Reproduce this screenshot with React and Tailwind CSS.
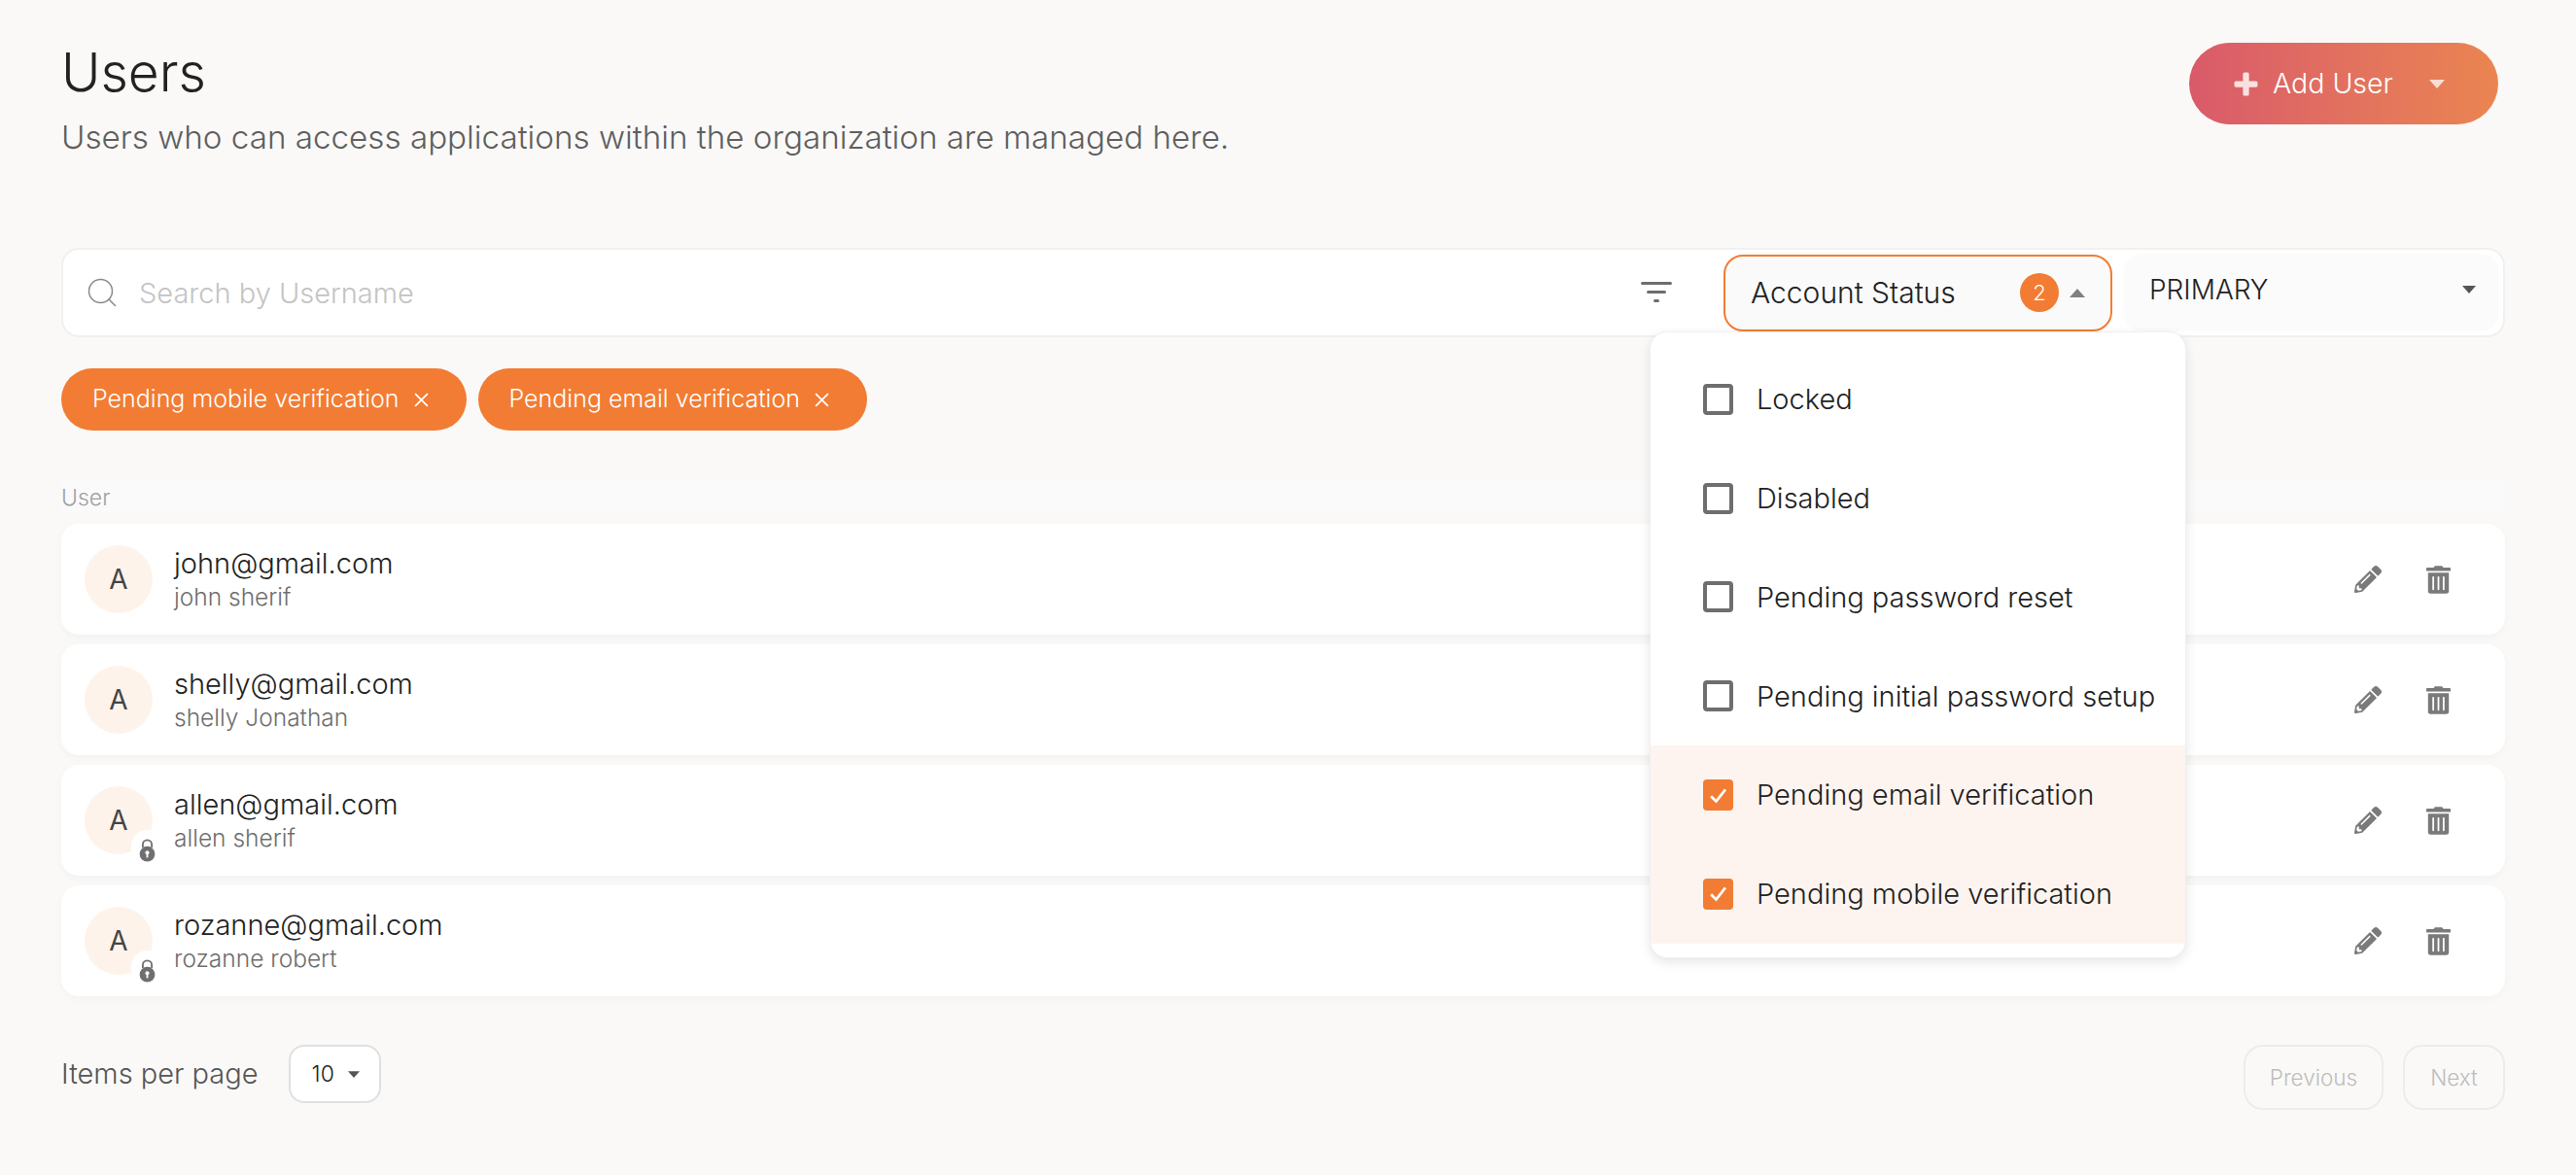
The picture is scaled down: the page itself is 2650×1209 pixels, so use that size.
import { Search } from 'lucide-react';
import { FaPencilAlt, FaTrashAlt } from 'react-icons/fa';

const users = [
    { email: 'john@gmail.com', name: 'john sherif', locked: false },
    { email: 'shelly@gmail.com', name: 'shelly Jonathan', locked: false },
    { email: 'allen@gmail.com', name: 'allen sherif', locked: true },
    { email: 'rozanne@gmail.com', name: 'rozanne robert', locked: true },
];

const statuses = [
    { label: 'Locked', checked: false },
    { label: 'Disabled', checked: false },
    { label: 'Pending password reset', checked: false },
    { label: 'Pending initial password setup', checked: false },
    { label: 'Pending email verification', checked: true },
    { label: 'Pending mobile verification', checked: true },
];

function Caret({ className, up }) {
    return (
        <svg viewBox="0 0 16 9" className={className} fill="currentColor">
            <path d={up ? 'M8 0 16 9H0Z' : 'M0 0H16L8 9Z'} />
        </svg>
    );
}

function LockBadge() {
    return (
        <div className="absolute right-[-10px] bottom-[-9px] w-[32px] h-[34px] rounded-full bg-white flex items-end justify-center pb-[1px]">
            <svg viewBox="0 0 18 26" className="w-[17px] h-[24px]" fill="#6f6f6f">
                <path d="M4 10V6.5a5 5 0 0 1 10 0V10" fill="none" stroke="#6f6f6f" strokeWidth="2" />
                <circle cx="9" cy="17" r="8.5" />
                <circle cx="9" cy="15.5" r="2.2" fill="#fff" />
                <rect x="8" y="16" width="2" height="5" fill="#fff" />
            </svg>
        </div>
    );
}

function Chip({ label }) {
    return (
        <div className="h-[64px] pl-[32px] pr-[38px] rounded-[32px] bg-[#f27c33] text-white flex items-center gap-[14px] text-[25px] font-light">
            <span>{label}</span>
            <svg viewBox="0 0 16 16" className="w-[17px] h-[17px]" stroke="#fff" strokeWidth="1.6" fill="none">
                <path d="M2 2 14 14M14 2 2 14" />
            </svg>
        </div>
    );
}

function UserRow({ user }) {
    return (
        <div className="h-[114px] rounded-[18px] bg-white shadow-[0_3px_8px_rgba(0,0,0,0.03)] flex items-center pl-[24px] pr-[56px]">
            <div className="relative w-[70px] h-[70px] rounded-full bg-[#fdf3ea] flex items-center justify-center text-[28px] text-[#444]">
                A
                {user.locked && <LockBadge />}
            </div>
            <div className="ml-[22px] flex-1">
                <div className="text-[29px] leading-[36px] font-light text-[#222]">{user.email}</div>
                <div className="text-[24.5px] leading-[32px] font-light text-[#6e6e6e]">{user.name}</div>
            </div>
            <FaPencilAlt className="w-[28px] h-[28px] text-[#7a7a7a]" />
            <FaTrashAlt className="ml-[46px] w-[25px] h-[29px] text-[#7a7a7a]" />
        </div>
    );
}

export default function App() {
    return (
        <div className="relative min-h-[1209px] bg-[#faf9f7] pl-[63px] pr-[73px] pt-[44px] font-['Inter',sans-serif]">
            <div className="flex justify-between items-start">
                <div>
                    <h1 className="text-[55px] leading-[60px] font-light text-[#222]">Users</h1>
                    <p className="mt-[15px] text-[33.2px] leading-[44px] font-light text-[#5f5f5f]">Users who can access applications within the organization are managed here.</p>
                </div>
                <button className="mr-[7px] w-[318px] h-[84px] rounded-[42px] bg-gradient-to-r from-[#d95a6a] to-[#ea8550] text-white flex items-center pl-[46px] text-[28.5px] font-light">
                    <svg viewBox="0 0 24 24" className="w-[25px] h-[25px]" fill="#fadfe0">
                        <path d="M9 2a1.5 1.5 0 0 1 1.5-1.5h3A1.5 1.5 0 0 1 15 2v7h7a1.5 1.5 0 0 1 1.5 1.5v3A1.5 1.5 0 0 1 22 15h-7v7a1.5 1.5 0 0 1-1.5 1.5h-3A1.5 1.5 0 0 1 9 22v-7H2a1.5 1.5 0 0 1-1.5-1.5v-3A1.5 1.5 0 0 1 2 9h7Z" />
                    </svg>
                    <span className="ml-[15px]">Add User</span>
                    <Caret className="ml-[37px] w-[16px] h-[9px] text-[#fadcd5]" />
                </button>
            </div>

            {/* Search and filters */}
            <div className="mt-[92px] h-[92px] rounded-[18px] border-2 border-[#f0f0f0] bg-white flex items-center pr-[4px]">
                <Search className="ml-[22px] w-[36px] h-[36px] text-[#8a8a8a]" strokeWidth={1} />
                <div className="ml-[20px] pt-[2px] flex-1 text-[29px] font-light text-[#c4c4c4]">Search by Username</div>
                <svg viewBox="0 0 32 22" className="w-[32px] h-[22px]" fill="#6e6e6e">
                    <rect x="0" y="0" width="32" height="3" rx="1.5" />
                    <rect x="6" y="9" width="20" height="3" rx="1.5" />
                    <rect x="13" y="18" width="6" height="3" rx="1.5" />
                </svg>
                <div className="ml-[53px] w-[400px] h-[79px] rounded-[20px] border-2 border-[#f27c33] bg-[#fafafa] flex items-center pl-[26px] pr-[25px]">
                    <span className="flex-1 text-[30px] font-light text-[#222]">Account Status</span>
                    <span className="w-[40px] h-[40px] rounded-full bg-[#f27c33] text-white text-[22px] font-light flex items-center justify-center">2</span>
                    <Caret up className="ml-[10px] w-[18px] h-[9px] text-[#808080]" />
                </div>
                <div className="ml-[11px] w-[387px] h-[80px] rounded-[20px] bg-[#fbfbfb] flex items-center pl-[27px] pr-[24px] pb-[6px]">
                    <span className="flex-1 text-[28px] font-light text-[#222]">PRIMARY</span>
                    <Caret className="w-[14px] h-[8px] text-[#555]" />
                </div>
            </div>

            {/* Status dropdown */}
            <div className="absolute left-[1697px] top-[341px] w-[552px] h-[645px] rounded-[18px] bg-white border border-[#f0f0f0] shadow-[0_4px_12px_rgba(0,0,0,0.1)] pt-[18px] z-10">
                {statuses.map(s => (
                    <div key={s.label} className={`h-[101.8px] flex items-center pl-[54px] ${s.checked ? 'bg-[#fdf4ef]' : ''}`}>
                        {s.checked ? (
                            <div className="w-[31px] h-[32px] rounded-[4px] bg-[#f27c33] flex items-center justify-center">
                                <svg viewBox="0 0 20 20" className="w-[27px] h-[27px]" fill="none" stroke="#fff" strokeWidth="2">
                                    <path d="M4.5 10.5 8.5 14.5 15.5 5.5" />
                                </svg>
                            </div>
                        ) : (
                            <div className="w-[31px] h-[32px] rounded-[4px] border-[4px] border-[#6e6e6e]" />
                        )}
                        <span className="ml-[24px] text-[29px] font-light text-[#222] whitespace-nowrap">{s.label}</span>
                    </div>
                ))}
            </div>

            {/* Active filters */}
            <div className="mt-[32px] flex gap-[12px]">
                <Chip label="Pending mobile verification" />
                <Chip label="Pending email verification" />
            </div>

            <div className="mt-[51px] h-[34px] pt-[2px] bg-[#fafafb] text-[23px] font-light text-[#a0a0a0] flex items-center">User</div>

            <div className="mt-[11px] flex flex-col gap-[10px]">
                {users.map(u => <UserRow key={u.email} user={u} />)}
            </div>

            {/* Pagination */}
            <div className="mt-[50px] flex items-start justify-between">
                <div className="flex items-center">
                    <span className="text-[29px] font-light text-[#555]">Items per page</span>
                    <div className="ml-[31px] w-[95px] h-[60px] rounded-[16px] border-2 border-[#e0e0e0] bg-white flex items-center pl-[22px]">
                        <span className="text-[23px] font-light text-[#222]">10</span>
                        <Caret className="ml-[14px] w-[12px] h-[7px] text-[#555]" />
                    </div>
                </div>
                <div className="flex gap-[20px]">
                    <button className="w-[144px] h-[67px] rounded-[20px] border-2 border-[#ececec] text-[22.5px] font-light text-[#bdbdbd]">Previous</button>
                    <button className="w-[105px] h-[67px] rounded-[20px] border-2 border-[#ececec] text-[22.5px] font-light text-[#bdbdbd]">Next</button>
                </div>
            </div>
        </div>
    );
}
